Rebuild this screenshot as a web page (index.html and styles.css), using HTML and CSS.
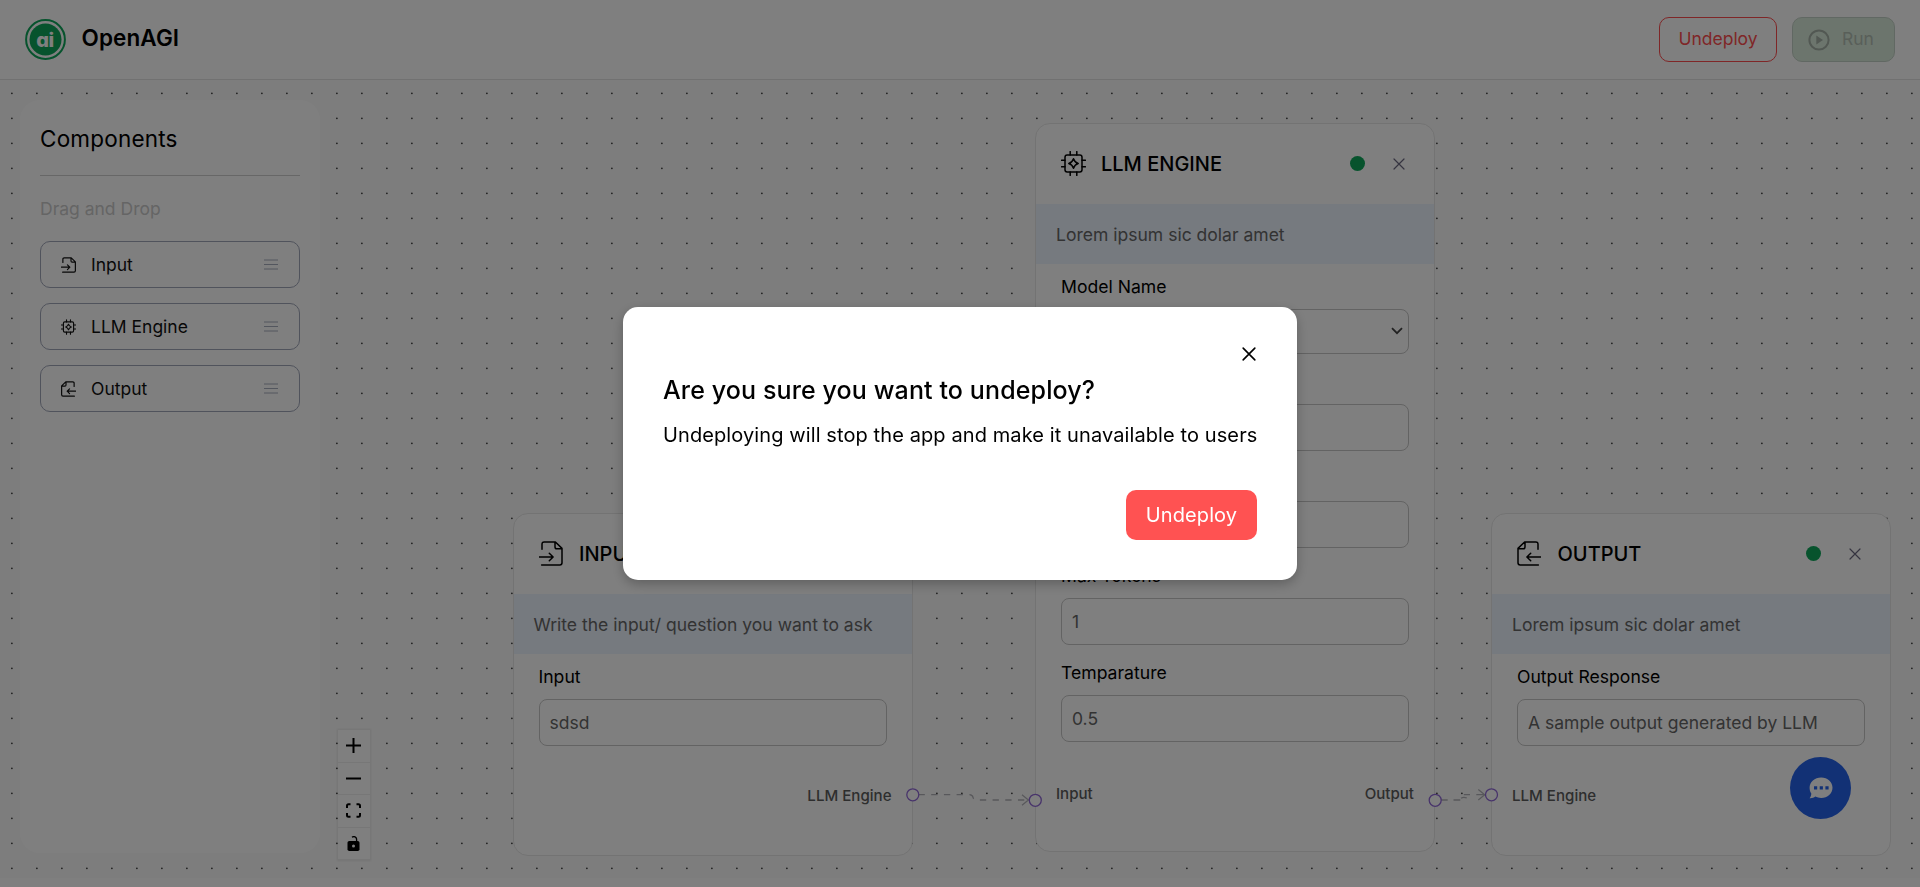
FILE: index.html
```html
<!DOCTYPE html>
<html lang="en">
<head>
<meta charset="utf-8">
<title>OpenAGI</title>
<link rel="stylesheet" href="styles.css">
</head>
<body>
<svg class="sprite" aria-hidden="true">
  <symbol id="i-input" viewBox="0 0 24 25"><path d="M3 8.3V3.2Q3 1 5.2 1H16.4L23 7.4V21.8Q23 24 20.8 24H2.6M16 1V6Q16 7.8 17.8 7.8H23M.4 16H14M10.3 12.2L14.1 16L10.3 19.8"/></symbol>
  <symbol id="i-output" viewBox="0 0 24 25"><path d="M21 8.3V3.2Q21 1 18.8 1H7.6L1 7.4V21.8Q1 24 3.2 24H21.4M8 1V6Q8 7.8 6.2 7.8H1M23.6 16H10M13.7 12.2L9.9 16L13.7 19.8"/></symbol>
  <symbol id="i-chip" viewBox="0 0 25 25"><rect x="4" y="4" width="17" height="17" rx="2.2"/><path d="M9.2 4V.6M15.8 4V.6M9.2 24.4V21M15.8 24.4V21M4 9.2H.6M4 15.8H.6M24.4 9.2H21M24.4 15.8H21M12.5 7.8Q13.6 11.4 17.2 12.5Q13.6 13.6 12.5 17.2Q11.4 13.6 7.8 12.5Q11.4 11.4 12.5 7.8Z"/></symbol>
  <symbol id="i-x" viewBox="0 0 12 12"><path d="M1 1L11 11M11 1L1 11"/></symbol>
  <symbol id="i-bars" viewBox="0 0 14 11"><path d="M0 1H14M0 5.5H14M0 10H14"/></symbol>
</svg>

<header class="topbar">
  <svg class="logo" viewBox="0 0 41 41">
    <circle cx="20.5" cy="20.5" r="19.4" fill="#fff" stroke="#0ea75b" stroke-width="2"/>
    <circle cx="20.5" cy="20.5" r="16" fill="#0ea75b"/>
    <text class="logo-text" x="20" y="28" text-anchor="middle">ai</text>
  </svg>
  <h1 class="brand">OpenAGI</h1>
  <div class="actions">
    <button class="btn btn-outline">Undeploy</button>
    <button class="btn btn-run" disabled>
      <svg class="play" viewBox="0 0 22 22"><circle cx="11" cy="11" r="9.6"/><path d="M8.3 6.5V15.5L15 11Z"/></svg>
      Run
    </button>
  </div>
</header>

<main class="canvas">
  <svg class="layer" width="1920" height="797">
    <defs><pattern id="dots" width="25" height="25" patternUnits="userSpaceOnUse"><circle cx="11.9" cy="13.3" r=".85" fill="#333"/></pattern></defs>
    <rect width="1920" height="797" fill="url(#dots)"/>
  </svg>

  <aside class="sidebar">
    <h2 class="sidebar-title">Components</h2>
    <p class="hint">Drag and Drop</p>
    <div class="item"><svg class="item-icon"><use href="#i-input"/></svg><span>Input</span><svg class="bars"><use href="#i-bars"/></svg></div>
    <div class="item"><svg class="item-icon"><use href="#i-chip"/></svg><span>LLM Engine</span><svg class="bars"><use href="#i-bars"/></svg></div>
    <div class="item"><svg class="item-icon"><use href="#i-output"/></svg><span>Output</span><svg class="bars"><use href="#i-bars"/></svg></div>
  </aside>

  <section class="node node-input">
    <div class="node-head"><svg class="node-icon"><use href="#i-input"/></svg><h3>INPUT</h3><i class="status"></i><svg class="close"><use href="#i-x"/></svg></div>
    <p class="band">Write the input/ question you want to ask</p>
    <div class="fields"><label>Input</label><div class="field">sdsd</div></div>
    <div class="ports ports-end"><span>LLM Engine</span></div>
  </section>

  <section class="node node-llm">
    <div class="node-head"><svg class="node-icon chip"><use href="#i-chip"/></svg><h3>LLM ENGINE</h3><i class="status"></i><svg class="close"><use href="#i-x"/></svg></div>
    <p class="band">Lorem ipsum sic dolar amet</p>
    <div class="fields">
      <label>Model Name</label><div class="field select"><svg class="chev" viewBox="0 0 12 8"><path d="M1 1.2L6 6.2L11 1.2"/></svg></div>
      <label>&nbsp;</label><div class="field"></div>
      <label>&nbsp;</label><div class="field"></div>
      <label>Max Tokens</label><div class="field">1</div>
      <label>Temparature</label><div class="field">0.5</div>
    </div>
    <div class="ports"><span>Input</span><span>Output</span></div>
  </section>

  <section class="node node-output">
    <div class="node-head"><svg class="node-icon"><use href="#i-output"/></svg><h3>OUTPUT</h3><i class="status"></i><svg class="close"><use href="#i-x"/></svg></div>
    <p class="band">Lorem ipsum sic dolar amet</p>
    <div class="fields"><label>Output Response</label><div class="field">A sample output generated by LLM</div></div>
    <div class="ports"><span>LLM Engine</span></div>
  </section>

  <svg class="layer" width="1920" height="797">
    <g class="edge">
      <path class="dash" d="M918.5 714.7H968.5Q972.5 714.7 973 717.3Q973.6 720 978 720H1028"/>
      <path d="M1022 714.7L1028.4 720L1022 725.3"/>
      <path d="M1441 720H1447.7M1453.5 720H1460.3M1461 718.3Q1463.5 716.4 1466.8 718M1463.8 714.7H1470M1476.3 714.7H1485"/>
      <path d="M1478.3 709.5L1484.7 714.8L1478.3 720.1"/>
    </g>
    <g class="handle">
      <circle cx="912.8" cy="714.8" r="6"/><circle cx="1035.3" cy="720.3" r="6"/>
      <circle cx="1435.2" cy="720.3" r="6"/><circle cx="1491.5" cy="714.8" r="6"/>
    </g>
  </svg>

  <div class="controls">
    <span><svg viewBox="0 0 15 15"><path d="M7.5 0V15M0 7.5H15"/></svg></span>
    <span><svg viewBox="0 0 15 15"><path d="M0 7.5H15"/></svg></span>
    <span><svg viewBox="0 0 15 15"><path d="M1 5V2.8Q1 1.3 2.5 1.3H4.5M10.5 1.3H12.5Q14 1.3 14 2.8V5M14 10V12.2Q14 13.7 12.5 13.7H10.5M4.5 13.7H2.5Q1 13.7 1 12.2V10"/></svg></span>
    <span><svg viewBox="0 0 15 15"><rect class="solid" x="1.5" y="5" width="12" height="10" rx="1.8"/><path class="thin" d="M6 1.3Q7 .5 8.2 .6Q10.6 1 10.6 3.6V5.5"/><circle class="keyhole" cx="7.5" cy="10" r="1.5"/></svg></span>
  </div>

  <div class="chat"><svg viewBox="0 0 24 22"><path fill="#fff" d="M12.2 .5C18.600 .5 23.500 5 23.500 10.800C23.500 16.600 18.600 21 12.200 21C10 21 8 20.500 6.300 19.600C4.800 20.800 2.800 21.400 .6 21.200C1.700 20 2.300 18.500 2.300 16.600C1.200 15 .6 13 .6 10.800C.6 5 5.700 .5 12.200 .5Z"/><path fill="#2563eb" d="M5 9.300h3.200v3.200H5zM10.700 9.300h3.200v3.200h-3.200zM16.400 9.300h3.200v3.200h-3.200z"/></svg></div>
</main>

<div class="overlay">
  <div class="dialog" role="dialog">
    <svg class="dialog-close"><use href="#i-x"/></svg>
    <h2>Are you sure you want to undeploy?</h2>
    <p>Undeploying will stop the app and make it unavailable to users</p>
    <button class="confirm">Undeploy</button>
  </div>
</div>
</body>
</html>
```
FILE: styles.css
```css
* { box-sizing: border-box; margin: 0; padding: 0; }
body { width: 1920px; height: 887px; overflow: hidden; background: #fff; color: #000; font-family: Inter, "Liberation Sans", sans-serif; }
svg { display: block; flex: none; }
.sprite { position: absolute; width: 0; height: 0; }
symbol path, symbol rect { fill: none; stroke: currentColor; stroke-linecap: round; stroke-linejoin: round; }
button { font-family: inherit; }

.topbar { display: flex; align-items: center; height: 80px; padding: 0 25px; border-bottom: 1px solid #e2e2e2; }
.logo { width: 41px; height: 41px; }
.logo-text { font: 800 20px Inter, sans-serif; font-feature-settings: "cv11"; letter-spacing: -.5px; fill: #fff; }
.brand { margin: -4px 0 0 15.500px; font-size: 22.500px; line-height: 28px; font-weight: 600; letter-spacing: .1px; }
.actions { display: flex; gap: 15px; margin-left: auto; }
.btn { display: flex; align-items: center; height: 45px; padding: 0 20px 2px; border-radius: 10px; font-size: 17.500px; }
.btn-outline { width: 118px; justify-content: center; background: #fff; border: 1px solid #ff4d4f; color: #ff4d4f; }
.btn-run { width: 103px; gap: 12px; padding: 0 0 2px 15px; background: #d9ebdb; border: 1px solid #c3d1c6; color: #b2beb3; }
.play { width: 22px; height: 22px; margin-top: 2px; }
.play circle { fill: none; stroke: #a5b0a6; stroke-width: 2; }
.play path { fill: #a5b0a6; }

.canvas { position: relative; height: 798px; padding: 20px; background: #fbfbfb; }
.layer { position: absolute; left: 0; top: 0; }

.sidebar { position: relative; width: 300px; height: 753px; padding: 19px 20px; border-radius: 20px; background: #fff; }
.sidebar-title { height: 57px; padding-top: 3.500px; border-bottom: 1px solid #cfcfcf; font-size: 22.500px; line-height: 32px; font-weight: 400; letter-spacing: .2px; }
.hint { margin: 22px 0 21px; font-size: 17.500px; line-height: 22px; color: #cacaca; }
.item { display: flex; align-items: center; height: 47px; margin-bottom: 15px; padding: 0 21px 0 20px; border: 1px solid #a0a6b8; border-radius: 10px; font-size: 17.500px; color: #111; }
.item span { flex: 1; }
.item-icon { width: 15px; height: 16px; margin-right: 15px; stroke-width: 1.9; }
.bars { width: 14px; height: 11px; color: #a6acbc; stroke-width: 1; }

.node { position: absolute; top: 433px; width: 400px; height: 343px; border: 1px solid #e6e6e6; border-radius: 15px; background: #fff; }
.node-input { left: 512.500px; }
.node-llm { left: 1035px; top: 43px; height: 729px; }
.node-output { left: 1491px; }
.node-head { display: flex; align-items: center; height: 79.500px; padding: 0 29px 0 25px; }
.node-icon { width: 24px; height: 25px; margin-right: 16.500px; stroke-width: 1.5; }
.chip { width: 25px; margin-right: 15px; }
.node-head h3 { flex: 1; font-size: 20px; font-weight: 500; line-height: 24px; }
.status { width: 15px; height: 15px; border-radius: 50%; background: #0ea75b; }
.close { width: 12px; height: 12px; margin-left: 28px; color: #6b6880; stroke-width: 1.2; }
.band { height: 60px; padding-left: 20px; background: #ecf4ff; font-size: 17.550px; line-height: 61px; color: #666; }
.fields { padding: 11px 25px 0; font-size: 17.600px; }
.fields label { display: block; height: 34px; line-height: 23px; color: #000; }
.field { height: 47px; margin-bottom: 16px; padding-left: 10px; border: 1px solid #c6c6c6; border-radius: 8px; font-size: 17.500px; line-height: 46px; color: #666; }
.select { display: flex; align-items: center; justify-content: flex-end; height: 45px; padding-right: 5px; }
.chev { width: 12px; height: 8px; }
.chev path { fill: none; stroke: #444; stroke-width: 1.8; }
.ports { display: flex; justify-content: space-between; padding: 22px 20px 0; font-size: 15.100px; font-weight: 500; line-height: 24px; color: #5c5c5c; }
.node-llm .ports { padding-top: 24px; }
.ports-end { justify-content: flex-end; }

.edge { fill: none; stroke: #b1b1b7; stroke-width: 1.27; }
.dash { stroke-dasharray: 6.350 6.350; }
.handle { fill: #fff; stroke: #9068d6; stroke-width: 1.3; }

.controls { position: absolute; left: 337.500px; top: 650px; width: 32px; box-shadow: 0 0 2px 1px rgba(0, 0, 0, .08); background: #fff; }
.controls span { display: flex; align-items: center; justify-content: center; height: 32.500px; border-bottom: 1px solid #eee; }
.controls svg { width: 15px; height: 15px; fill: none; stroke: #000; stroke-width: 2; }
.controls .solid { fill: #000; stroke: none; }
.controls .thin { stroke-width: 1.3; }
.controls .keyhole { fill: #fff; stroke: none; }

.chat { position: absolute; left: 1790px; top: 677px; display: flex; align-items: center; justify-content: center; width: 61px; height: 62px; border-radius: 50%; background: #2563eb; }
.chat svg { width: 24px; height: 22px; }

.overlay { position: fixed; inset: 0; display: flex; align-items: center; justify-content: center; background: rgba(0, 0, 0, .5); }
.dialog { display: flex; flex-direction: column; width: 674px; height: 273px; padding: 40px; border-radius: 15px; background: #fff; box-shadow: 0 4px 12px rgba(0, 0, 0, .25); }
.dialog-close { align-self: flex-end; width: 14px; height: 14px; margin-right: 1px; stroke-width: 1.4; }
.dialog h2 { margin-top: 14px; font-size: 25px; font-weight: 500; line-height: 30px; letter-spacing: .12px; white-space: nowrap; }
.dialog p { margin-top: 18px; font-size: 20px; line-height: 24px; letter-spacing: .1px; white-space: nowrap; }
.confirm { align-self: flex-end; width: 131px; height: 50px; margin-top: auto; border: 0; border-radius: 10px; background: #ff5252; color: #fff; font-size: 20px; letter-spacing: .1px; }
```
